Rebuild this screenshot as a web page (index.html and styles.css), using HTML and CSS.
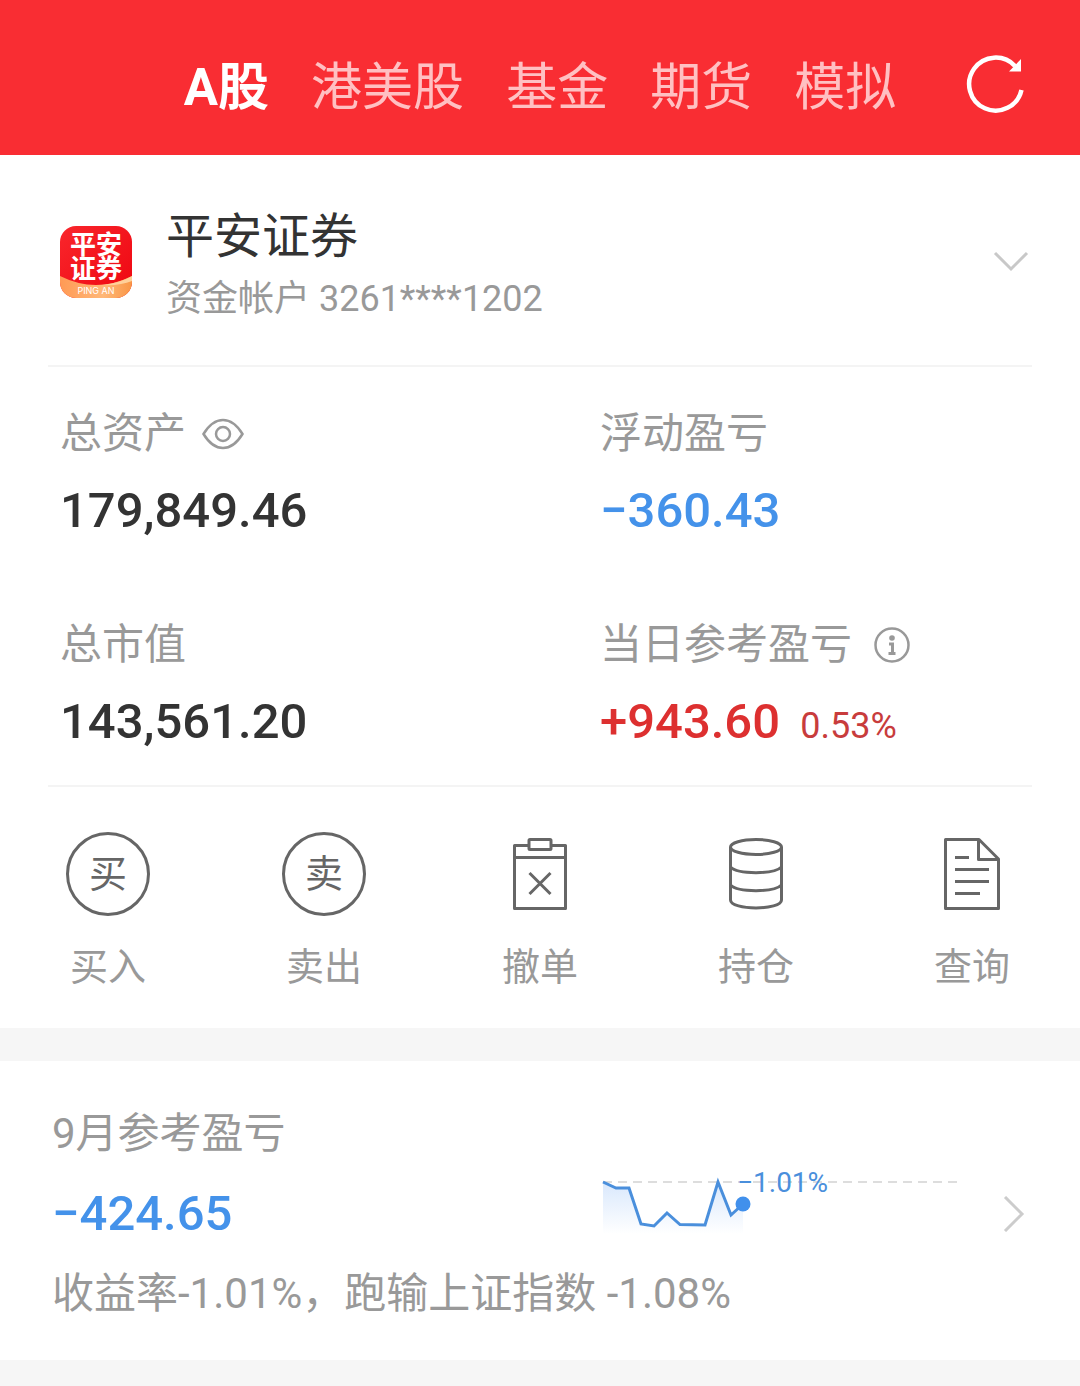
FILE: index.html
```html
<!DOCTYPE html>
<html lang="zh-CN">
<head>
  <meta charset="UTF-8">
  <meta name="viewport" content="width=device-width, initial-scale=1.0">
  <title>平安证券</title>
  <link rel="stylesheet" href="styles.css">
</head>
<body>

<header class="topbar">
  <nav class="tabs">
    <button type="button" class="tab active">A股</button>
    <button type="button" class="tab">港美股</button>
    <button type="button" class="tab">基金</button>
    <button type="button" class="tab">期货</button>
    <button type="button" class="tab">模拟</button>
  </nav>
  <button type="button" class="refresh" aria-label="刷新">
    <svg width="60" height="60" viewBox="0 0 60 60">
      <path d="M55.500 36A26.500 26.500 0 1 1 49 12" fill="none" stroke="#fff" stroke-width="4.500"/>
      <path d="M55 5v12.500H43z" fill="#fff"/>
    </svg>
  </button>
</header>

<main>
  <section class="account">
    <svg class="logo" width="72" height="72" viewBox="0 0 72 72">
      <defs>
        <linearGradient id="logoRed" x1="0" y1="0" x2="1" y2="1">
          <stop offset="0" stop-color="#f9262c"/>
          <stop offset="1" stop-color="#ee0610"/>
        </linearGradient>
        <linearGradient id="logoGold" x1="0" y1="0" x2="1" y2="0">
          <stop offset="0" stop-color="#ff9a55"/>
          <stop offset="0.600" stop-color="#ffb878"/>
          <stop offset="1" stop-color="#f99646"/>
        </linearGradient>
        <clipPath id="logoClip"><rect width="72" height="72" rx="16"/></clipPath>
      </defs>
      <g clip-path="url(#logoClip)">
        <rect width="72" height="72" fill="url(#logoRed)"/>
        <path d="M0 50Q36 68 72 50V72H0z" fill="url(#logoGold)"/>
        <path d="M42 59Q60 57 72 50V55Q60 60 42 59z" fill="#ffd09a"/>
      </g>
      <text class="logo-name" x="36" y="28" text-anchor="middle">平安</text>
      <text class="logo-name" x="36" y="52" text-anchor="middle">证券</text>
      <text class="logo-sub" x="36" y="68" text-anchor="middle">PING AN</text>
    </svg>
    <div class="account-info">
      <h1>平安证券</h1>
      <p>资金帐户 3261****1202</p>
    </div>
    <button type="button" class="icon-btn" aria-label="展开">
      <svg width="36" height="22" viewBox="0 0 36 22"><path d="M2 2l16 16L34 2" fill="none" stroke="#c8c8c8" stroke-width="3"/></svg>
    </button>
  </section>

  <section class="stats">
    <div class="stat">
      <div class="label">总资产
        <svg width="42" height="32" viewBox="0 0 42 32" fill="none" stroke="#999" stroke-width="2.500">
          <path d="M1.500 16C7 7 13 2 21 2s14 5 19.500 14C35 25 29 30 21 30S7 25 1.500 16z"/>
          <circle cx="21" cy="16" r="7"/>
        </svg>
      </div>
      <div class="value">179,849.46</div>
    </div>
    <div class="stat">
      <div class="label">浮动盈亏</div>
      <div class="value down">−360.43</div>
    </div>
    <div class="stat">
      <div class="label">总市值</div>
      <div class="value">143,561.20</div>
    </div>
    <div class="stat">
      <div class="label wide">当日参考盈亏
        <svg width="36" height="36" viewBox="0 0 36 36" fill="none" stroke="#999" stroke-width="2.500">
          <circle cx="18" cy="18" r="16.500"/>
          <circle cx="18" cy="11" r="2.800" fill="#999" stroke="none"/>
          <path d="M15 17h3.500v9M14.500 26.500h7" stroke-width="3"/>
        </svg>
      </div>
      <div class="value up">+943.60 <span>0.53%</span></div>
    </div>
  </section>

  <section class="actions">
    <button type="button" class="action">
      <span class="round">买</span>
      买入
    </button>
    <button type="button" class="action">
      <span class="round">卖</span>
      卖出
    </button>
    <button type="button" class="action">
      <svg width="84" height="84" viewBox="0 0 84 84" fill="none" stroke="#666" stroke-width="3" stroke-linejoin="round">
        <path d="M31 13.500H16.500V76.500H67.500V13.500H53M16.500 25.500H67.500"/>
        <rect x="31" y="7.500" width="22" height="10" rx="1"/>
        <path d="M31.500 41l21 21M52.500 41L31.500 62"/>
      </svg>
      撤单
    </button>
    <button type="button" class="action">
      <svg width="84" height="84" viewBox="0 0 84 84" fill="none" stroke="#666" stroke-width="3">
        <ellipse cx="42" cy="15" rx="25.500" ry="7.500"/>
        <path d="M16.500 15V68C16.500 78.500 67.500 78.500 67.500 68V15"/>
        <path d="M16.500 35C24 42.500 60 42.500 67.500 35M16.500 53C24 60.500 60 60.500 67.500 53"/>
      </svg>
      持仓
    </button>
    <button type="button" class="action">
      <svg width="84" height="84" viewBox="0 0 84 84" fill="none" stroke="#666" stroke-width="3" stroke-linejoin="round">
        <path d="M15.500 7.500H49L68.500 27V76.500H15.500z"/>
        <path d="M48.500 7.500V27.500H68.500"/>
        <path d="M25 25.500h14M25 37.500h34M25 49.500h34M25 61.500h25"/>
      </svg>
      查询
    </button>
  </section>

  <section class="month">
    <div class="label">9月参考盈亏</div>
    <div class="month-row">
      <div class="value down">−424.65</div>
      <div class="trend">
        <svg class="chart" width="356" height="84" viewBox="0 0 356 84">
          <defs>
            <linearGradient id="area" x1="0" y1="0" x2="0" y2="1">
              <stop offset="0" stop-color="#d9e8fc"/>
              <stop offset="1" stop-color="#fff"/>
            </linearGradient>
          </defs>
          <path d="M0 10H354" stroke="#ddd" stroke-width="2" stroke-dasharray="9 6"/>
          <path d="M0 10L13 16H26L38 52L51 54L64 41L77 52.500L102 53L115 10L128 43L140 32V62H0z" fill="url(#area)"/>
          <path d="M0 10L13 16H26L38 52L51 54L64 41L77 52.500L102 53L115 10L128 43L140 32" fill="none" stroke="#4a8fdc" stroke-width="3"/>
          <circle cx="140" cy="32" r="7.500" fill="#4190ec"/>
          <text class="chart-text" x="134" y="20">−1.01%</text>
        </svg>
        <button type="button" class="icon-btn" aria-label="详情">
          <svg width="22" height="36" viewBox="0 0 22 36"><path d="M2 1l17 17L2 35" fill="none" stroke="#ccc" stroke-width="3"/></svg>
        </button>
      </div>
    </div>
    <p class="note">收益率-1.01%，跑输上证指数 -1.08%</p>
  </section>
</main>

</body>
</html>
```
FILE: styles.css
```css
* {
  box-sizing: border-box;
}

body {
  margin: 0;
  background: #f6f6f6;
  color: #999;
  font-family: Roboto, "Noto Sans CJK SC", sans-serif;
}

h1, p {
  margin: 0;
  font-weight: 400;
}

button {
  padding: 0;
  border: none;
  background: none;
  color: inherit;
  font: inherit;
  cursor: pointer;
}

svg {
  display: block;
  flex: none;
}

/* top bar */
.topbar {
  display: grid;
  grid-template-columns: 1fr auto 1fr;
  align-items: center;
  padding: 44px 0 31px;
  background: #f92d33;
}

.tabs {
  display: flex;
  grid-column: 2;
  gap: 42px;
  padding-top: 8px;
}

.tab {
  color: #ffc0c2;
  font-size: 51px;
  line-height: 72px;
}

.tab.active {
  color: #fff;
  font-weight: 700;
}

.refresh {
  justify-self: end;
  margin-right: 54px;
}

/* account */
.account {
  display: flex;
  align-items: center;
  padding: 52px 48px 48px 60px;
  background: #fff;
}

.account-info {
  flex: 1;
  margin-left: 34px;
}

.account h1 {
  color: #333;
  font-size: 48px;
  line-height: 60px;
}

.account p {
  margin-top: 14px;
  font-size: 36px;
  line-height: 36px;
}

.account .icon-btn {
  margin-right: 3px;
}

.logo-name {
  fill: #fff;
  font-size: 26px;
  font-weight: 700;
}

.logo-sub {
  fill: #fff;
  font-family: Inter, sans-serif;
  font-size: 9px;
}

/* balances */
.stats {
  display: grid;
  grid-template-columns: 1fr 1fr;
  position: relative;
  background: #fff;
}

.stats::before,
.stats::after {
  content: "";
  position: absolute;
  left: 48px;
  right: 48px;
  height: 2px;
  background: #f4f4f4;
}

.stats::before {
  top: 0;
}

.stats::after {
  bottom: 0;
}

.stat {
  padding: 39px 0 35px 60px;
}

.label {
  display: flex;
  align-items: center;
  gap: 16px;
  font-size: 42px;
  line-height: 60px;
}

.label.wide {
  gap: 22px;
}

.value {
  color: #333;
  font-size: 49px;
  font-weight: 500;
  line-height: 60px;
}

.stat .value {
  margin-top: 17px;
}

.value.down {
  color: #4492ea;
}

.value.up {
  color: #dd3030;
}

.value span {
  margin-left: 8px;
  color: #c83c3c;
  font-size: 36px;
  font-weight: 400;
  line-height: 36px;
}

/* trade buttons */
.actions {
  display: grid;
  grid-template-columns: repeat(5, 1fr);
  padding: 45px 0 37px;
  background: #fff;
}

.action {
  display: flex;
  flex-direction: column;
  align-items: center;
  gap: 27px;
  font-size: 38px;
  line-height: 48px;
}

.round {
  width: 84px;
  height: 84px;
  border: 3px solid #666;
  border-radius: 50%;
  color: #666;
  line-height: 78px;
}

/* monthly profit */
.month {
  margin-top: 33px;
  padding: 43px 0 36px;
  background: #fff;
}

.month .label,
.month .value,
.note {
  padding-left: 52px;
}

.month-row {
  display: grid;
  grid-template-columns: 1fr 1fr;
  align-items: center;
  margin: 8px 0;
}

.trend {
  display: flex;
  align-items: center;
  justify-content: space-between;
  padding: 0 55px 0 63px;
}

.chart {
  overflow: visible;
}

.chart-text {
  fill: #4a8fdc;
  font-size: 28px;
}

.note {
  font-size: 42px;
  line-height: 60px;
}
```
